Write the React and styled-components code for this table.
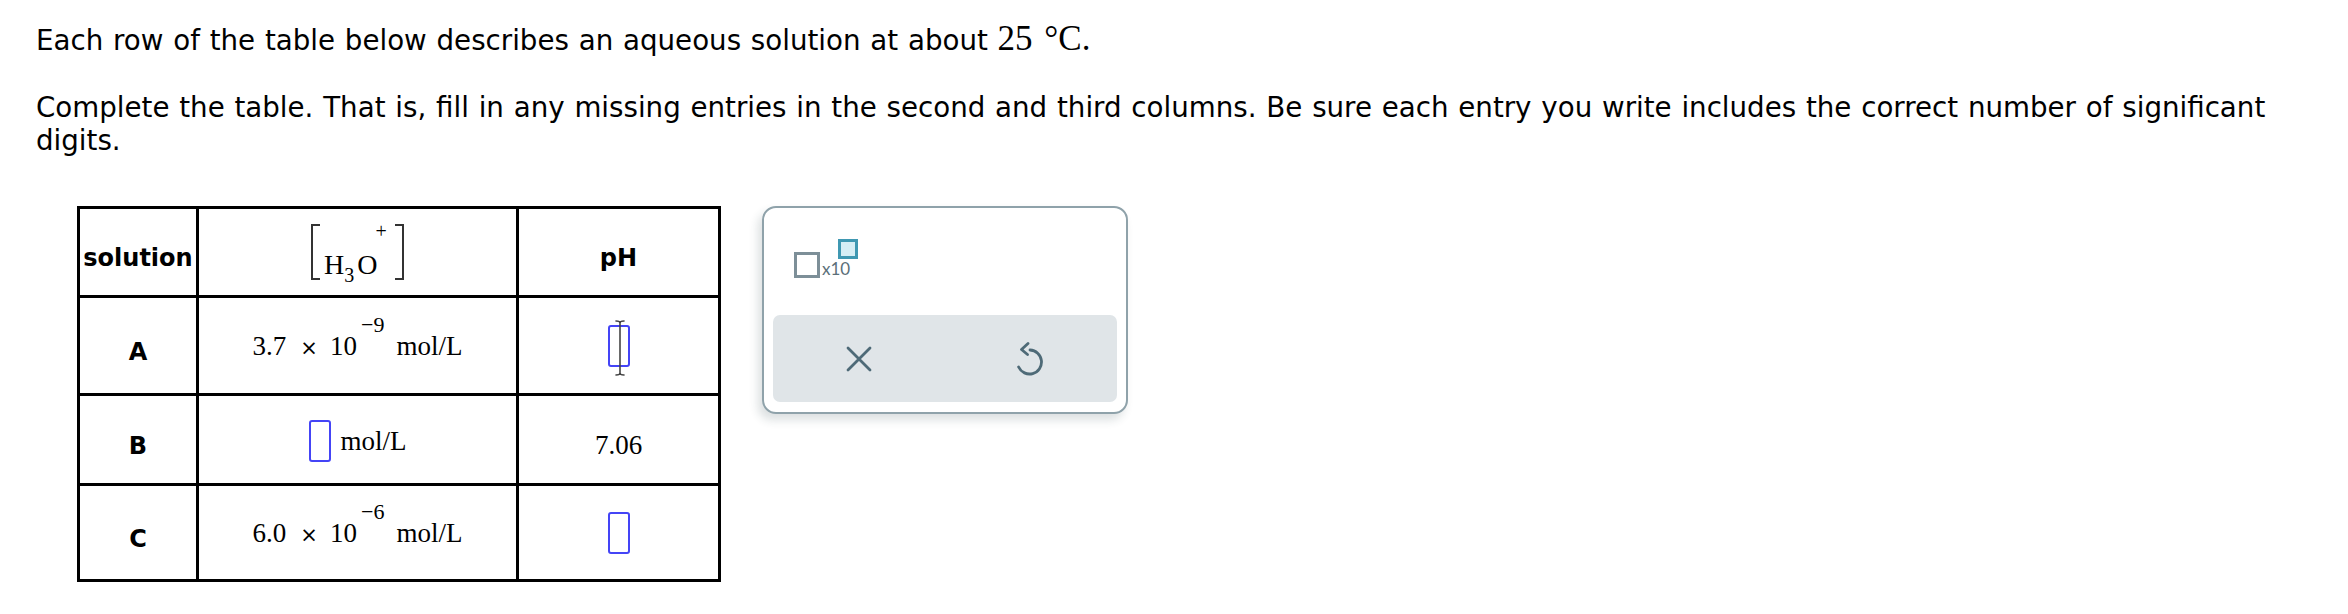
import React from 'react';
import styled, { createGlobalStyle } from 'styled-components';

const GlobalStyle = createGlobalStyle`
  body {
    margin: 0;
    background: #fff;
    color: #000;
    font-family: "DejaVu Sans", Verdana, sans-serif;
  }
`;

const Page = styled.div`
  padding: 22px 36px 0;
`;

const Prompt = styled.p`
  margin: ${p => (p.$gap ? '34px 0 0' : '0')};
  max-width: 2280px;
  font-size: 27.7px;
  word-spacing: 1px;
  line-height: 33px;
`;

const Temp = styled.span`
  font-family: "Liberation Serif", "Times New Roman", serif;
  font-size: 35px;
  word-spacing: 3px;
`;

const Work = styled.div`
  display: flex;
  align-items: flex-start;
  gap: 41px;
  margin: 49px 0 0 41px;
`;

const Table = styled.table`
  border-collapse: collapse;
  table-layout: fixed;
  width: 641px;
`;

const Row = styled.tr`
  height: ${p => p.$h}px;
`;

const Cell = styled.td`
  border: 3px solid #000;
  padding: ${p => p.$drop || 0}px 0 0;
  text-align: center;
  vertical-align: middle;
  width: ${p => (p.$w ? `${p.$w}px` : 'auto')};
`;

const Label = styled.span`
  font-family: "DejaVu Sans", Verdana, sans-serif;
  font-weight: bold;
  font-size: 24px;
`;

const Math = styled.span`
  font-family: "Liberation Serif", "Times New Roman", serif;
  font-size: 27px;
  white-space: nowrap;
`;

const Times = styled.span`
  font-family: "DejaVu Sans", sans-serif;
  font-size: 21px;
  margin: 0 12px 0 14px;
`;

const Exponent = styled.span`
  position: relative;
  top: -23px;
  font-size: 22px;
  margin: 0 12px 0 4px;
`;

const Bracketed = styled.span`
  position: relative;
  display: inline-block;
  box-sizing: border-box;
  width: 93px;
  height: 56px;
  padding: 25px 0 0 13px;
  vertical-align: middle;
  text-align: left;
  white-space: nowrap;
  font-family: "Liberation Serif", "Times New Roman", serif;
  font-size: 28px;
  line-height: 31px;

  &::before,
  &::after {
    content: '';
    position: absolute;
    top: 0;
    bottom: 0;
    width: 7px;
    border: 2px solid #333;
  }

  &::before {
    left: 0;
    border-right: none;
  }

  &::after {
    right: 0;
    border-left: none;
  }
`;

const Sub = styled.span`
  position: relative;
  top: 8px;
  font-size: 20px;
  margin-right: 3px;
`;

const Sup = styled.span`
  position: relative;
  top: -36px;
  font-size: 20px;
  margin-left: -2px;
`;

const AnswerSlot = styled.span`
  position: relative;
  display: inline-block;
  box-sizing: border-box;
  width: 22px;
  height: 42px;
  border: 2px solid #4444f6;
  border-radius: 3px;
  vertical-align: ${p => (p.$drop ? `-${p.$drop}px` : 'middle')};
  margin-right: ${p => (p.$gap ? `${p.$gap}px` : '0')};
`;

const Caret = styled.svg`
  position: absolute;
  left: 1px;
  top: -7px;
  overflow: visible;
`;

const Panel = styled.div`
  box-sizing: border-box;
  width: 366px;
  height: 208px;
  border: 2px solid #8fa2aa;
  border-radius: 14px;
  background: #fff;
  box-shadow: -4px 6px 10px rgba(40, 60, 70, 0.16);
  display: flex;
  flex-direction: column;
`;

const TemplateArea = styled.div`
  flex: 1;
  padding: 31px 0 0 30px;
`;

const Template = styled.div`
  display: inline-flex;
  align-items: flex-end;
`;

const Box = styled.span`
  box-sizing: border-box;
  width: ${p => p.$size}px;
  height: ${p => p.$size}px;
  border: 3px solid ${p => p.$line};
  background: ${p => p.$fill};
`;

const TenText = styled.span`
  font-family: Lato, "Open Sans", sans-serif;
  font-size: 17px;
  line-height: 1;
  color: #5b6f79;
  margin: 0 0 1px 2px;
`;

const RaisedBox = styled(Box)`
  margin: 0 0 19px -12px;
`;

const ButtonBar = styled.div`
  height: 87px;
  margin: 0 9px 10px;
  border-radius: 7px;
  background: #e0e5e8;
  display: grid;
  grid-template-columns: 1fr 1fr;
`;

const Action = styled.button`
  border: none;
  background: none;
  padding: 0;
  display: flex;
  align-items: center;
  justify-content: center;
  color: #4e6a77;
  cursor: pointer;
`;

const IBeam = () => (
  <Caret width="20" height="56" viewBox="0 0 20 56">
    <g fill="none" stroke="#444" strokeWidth="1.6" strokeLinecap="round">
      <path d="M9 2 V54" />
      <path d="M5 1 Q9 1 9 3 Q9 1 13 1" />
      <path d="M5 55 Q9 55 9 53 Q9 55 13 55" />
    </g>
  </Caret>
);

const CloseIcon = () => (
  <svg width="26" height="26" viewBox="0 0 26 26">
    <path d="M2 2 L24 24 M24 2 L2 24" stroke="currentColor" strokeWidth="2.8" strokeLinecap="round" />
  </svg>
);

const UndoIcon = () => (
  <svg width="28" height="34" viewBox="0 0 28 34">
    <g fill="none" stroke="currentColor" strokeWidth="2.8" strokeLinecap="round" strokeLinejoin="round">
      <path d="M13 8 A12 12 0 1 1 1.6 25" />
      <path d="M11 1.5 L4.5 7.5 L10.5 12.5" />
    </g>
  </svg>
);

const Scientific = ({ mantissa, power }) => (
  <Math>
    {mantissa}
    <Times>×</Times>
    10
    <Exponent>−{power}</Exponent>
    mol/L
  </Math>
);

export default function App() {
  return (
    <Page>
      <GlobalStyle />
      <Prompt>
        Each row of the table below describes an aqueous solution at about <Temp>25 °C.</Temp>
      </Prompt>
      <Prompt $gap>
        Complete the table. That is, fill in any missing entries in the second and third columns. Be sure each entry you write includes the correct number of significant digits.
      </Prompt>

      <Work>
        <Table>
          <tbody>
            <Row $h={89}>
              <Cell $w={116} $drop={12}><Label>solution</Label></Cell>
              <Cell $w={317}>
                <Bracketed>
                  H<Sub>3</Sub>O<Sup>+</Sup>
                </Bracketed>
              </Cell>
              <Cell $w={199} $drop={12}><Label>pH</Label></Cell>
            </Row>
            <Row $h={98}>
              <Cell $drop={12}><Label>A</Label></Cell>
              <Cell $drop={2}><Scientific mantissa="3.7" power="9" /></Cell>
              <Cell>
                <AnswerSlot>
                  <IBeam />
                </AnswerSlot>
              </Cell>
            </Row>
            <Row $h={90}>
              <Cell $drop={12}><Label>B</Label></Cell>
              <Cell $drop={2}>
                <Math>
                  <AnswerSlot $drop={12} $gap={10} />
                  mol/L
                </Math>
              </Cell>
              <Cell $drop={12}><Math>7.06</Math></Cell>
            </Row>
            <Row $h={96}>
              <Cell $drop={12}><Label>C</Label></Cell>
              <Cell $drop={2}><Scientific mantissa="6.0" power="6" /></Cell>
              <Cell><AnswerSlot /></Cell>
            </Row>
          </tbody>
        </Table>

        <Panel>
          <TemplateArea>
            <Template>
              <Box $size={26} $line="#7d8f98" $fill="#fff" />
              <TenText>x10</TenText>
              <RaisedBox $size={20} $line="#3f98b2" $fill="#d6eef5" />
            </Template>
          </TemplateArea>
          <ButtonBar>
            <Action aria-label="Clear"><CloseIcon /></Action>
            <Action aria-label="Undo"><UndoIcon /></Action>
          </ButtonBar>
        </Panel>
      </Work>
    </Page>
  );
}
